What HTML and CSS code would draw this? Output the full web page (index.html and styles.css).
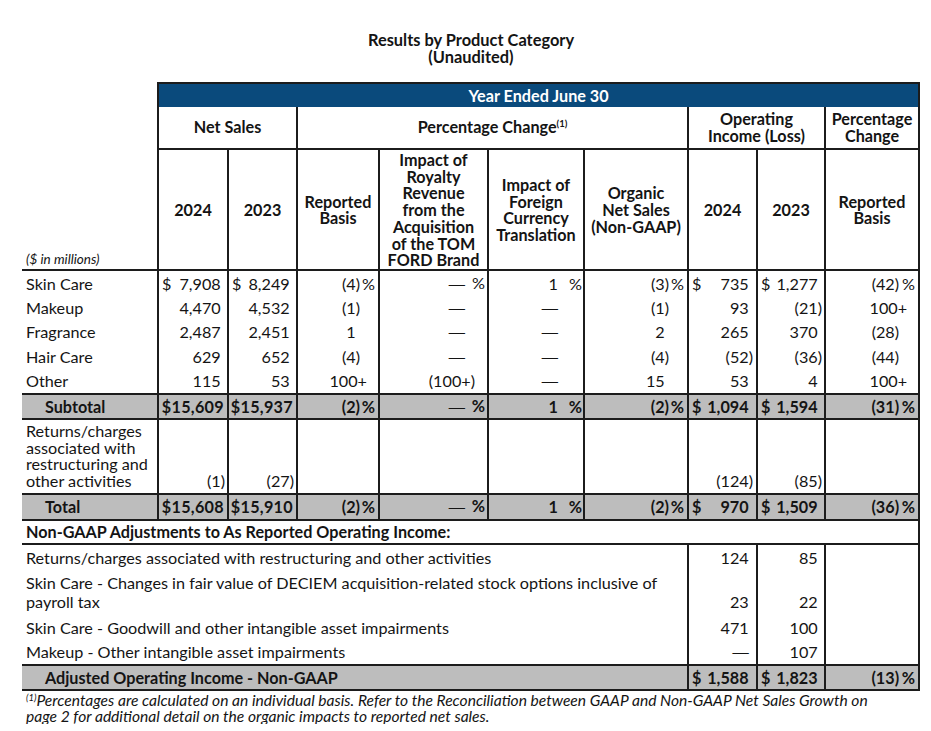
FILE: index.html
```html
<!DOCTYPE html>
<html>
<head>
<meta charset="utf-8">
<link rel="stylesheet" href="styles.css">
</head>
<body>
<div class="page">
  <div class="title">Results by Product Category<br>(Unaudited)</div>
  <table class="fin">
    <colgroup>
      <col class="w0"><col class="w1"><col class="w2"><col class="w3"><col class="w4"><col class="w5"><col class="w6"><col class="w7"><col class="w8"><col class="w9">
    </colgroup>
    <thead>
      <tr class="h1">
        <th class="blank"></th>
        <th colspan="9" class="year">Year Ended June 30</th>
      </tr>
      <tr class="h2">
        <th class="blank units-cell" rowspan="2"><span class="units">($ in millions)</span></th>
        <th colspan="2">Net Sales</th>
        <th colspan="4">Percentage Change<sup>(1)</sup></th>
        <th colspan="2" class="two">Operating<br>Income (Loss)</th>
        <th class="two">Percentage<br>Change</th>
      </tr>
      <tr class="h3">
        <th>2024</th>
        <th>2023</th>
        <th>Reported<br>Basis</th>
        <th>Impact of<br>Royalty<br>Revenue<br>from the<br>Acquisition<br>of the TOM<br>FORD Brand</th>
        <th>Impact of<br>Foreign<br>Currency<br>Translation</th>
        <th>Organic<br>Net Sales<br>(Non-GAAP)</th>
        <th>2024</th>
        <th>2023</th>
        <th>Reported<br>Basis</th>
      </tr>
    </thead>
    <tbody>
      <tr class="d first">
        <td class="lbl">Skin Care</td>
        <td class="n c1"><span class="cur">$</span>7,908<i class="gh">)</i></td>
        <td class="n c2"><span class="cur">$</span>8,249<i class="gh">)</i></td>
        <td class="n c3">(4)<span class="pc">%</span></td>
        <td class="n c4"><span class="dash">—</span><span class="pc">%</span></td>
        <td class="n c5">1<span class="pc">%</span></td>
        <td class="n c6">(3)<span class="pc">%</span></td>
        <td class="n c7"><span class="cur">$</span>735<i class="gh">)</i></td>
        <td class="n c8"><span class="cur">$</span>1,277<i class="gh">)</i></td>
        <td class="n c9">(42)<span class="pc">%</span></td>
      </tr>
      <tr class="d">
        <td class="lbl">Makeup</td>
        <td class="n c1">4,470<i class="gh">)</i></td>
        <td class="n c2">4,532<i class="gh">)</i></td>
        <td class="n c3">(1)<span class="pc"></span></td>
        <td class="n c4"><span class="dash">—</span><span class="pc"></span></td>
        <td class="n c5"><span class="dash">—</span><span class="pc"></span></td>
        <td class="n c6">(1)<span class="pc"></span></td>
        <td class="n c7">93<i class="gh">)</i></td>
        <td class="n c8">(21)</td>
        <td class="n c9">100+<span class="pc pcs"></span></td>
      </tr>
      <tr class="d">
        <td class="lbl">Fragrance</td>
        <td class="n c1">2,487<i class="gh">)</i></td>
        <td class="n c2">2,451<i class="gh">)</i></td>
        <td class="n c3">1<i class="gh">)</i><span class="pc"></span></td>
        <td class="n c4"><span class="dash">—</span><span class="pc"></span></td>
        <td class="n c5"><span class="dash">—</span><span class="pc"></span></td>
        <td class="n c6">2<i class="gh">)</i><span class="pc"></span></td>
        <td class="n c7">265<i class="gh">)</i></td>
        <td class="n c8">370<i class="gh">)</i></td>
        <td class="n c9">(28)<span class="pc"></span></td>
      </tr>
      <tr class="d">
        <td class="lbl">Hair Care</td>
        <td class="n c1">629<i class="gh">)</i></td>
        <td class="n c2">652<i class="gh">)</i></td>
        <td class="n c3">(4)<span class="pc"></span></td>
        <td class="n c4"><span class="dash">—</span><span class="pc"></span></td>
        <td class="n c5"><span class="dash">—</span><span class="pc"></span></td>
        <td class="n c6">(4)<span class="pc"></span></td>
        <td class="n c7">(52)</td>
        <td class="n c8">(36)</td>
        <td class="n c9">(44)<span class="pc"></span></td>
      </tr>
      <tr class="d">
        <td class="lbl">Other</td>
        <td class="n c1">115<i class="gh">)</i></td>
        <td class="n c2">53<i class="gh">)</i></td>
        <td class="n c3">100+<span class="pc pcs"></span></td>
        <td class="n c4">(100+)<span class="pc pcs"></span></td>
        <td class="n c5"><span class="dash">—</span><span class="pc"></span></td>
        <td class="n c6">15<i class="gh">)</i><span class="pc"></span></td>
        <td class="n c7">53<i class="gh">)</i></td>
        <td class="n c8">4<i class="gh">)</i></td>
        <td class="n c9">100+<span class="pc pcs"></span></td>
      </tr>
      <tr class="d band">
        <td class="lbl ind">Subtotal</td>
        <td class="n c1 bt">$15,609</td>
        <td class="n c2 bt">$15,937</td>
        <td class="n c3">(2)<span class="pc">%</span></td>
        <td class="n c4"><span class="dash">—</span><span class="pc">%</span></td>
        <td class="n c5">1<span class="pc">%</span></td>
        <td class="n c6">(2)<span class="pc">%</span></td>
        <td class="n c7"><span class="cur">$</span>1,094<i class="gh">)</i></td>
        <td class="n c8"><span class="cur">$</span>1,594<i class="gh">)</i></td>
        <td class="n c9">(31)<span class="pc">%</span></td>
      </tr>
      <tr class="ret">
        <td class="lbl">Returns/charges<br>associated with<br>restructuring and<br>other activities</td>
        <td class="n c1">(1)</td>
        <td class="n c2">(27)</td>
        <td class="n c3"></td>
        <td class="n c4"></td>
        <td class="n c5"></td>
        <td class="n c6"></td>
        <td class="n c7">(124)</td>
        <td class="n c8">(85)</td>
        <td class="n c9"></td>
      </tr>
      <tr class="d band tot">
        <td class="lbl ind">Total</td>
        <td class="n c1 bt">$15,608</td>
        <td class="n c2 bt">$15,910</td>
        <td class="n c3">(2)<span class="pc">%</span></td>
        <td class="n c4"><span class="dash">—</span><span class="pc">%</span></td>
        <td class="n c5">1<span class="pc">%</span></td>
        <td class="n c6">(2)<span class="pc">%</span></td>
        <td class="n c7"><span class="cur">$</span>970<i class="gh">)</i></td>
        <td class="n c8"><span class="cur">$</span>1,509<i class="gh">)</i></td>
        <td class="n c9">(36)<span class="pc">%</span></td>
      </tr>
      <tr class="gh-head">
        <td colspan="10" class="lbl sect">Non-GAAP Adjustments to As Reported Operating Income:</td>
      </tr>
      <tr class="adj a1">
        <td colspan="7" class="lbl">Returns/charges associated with restructuring and other activities</td>
        <td class="n c7">124<i class="gh">)</i></td>
        <td class="n c8">85<i class="gh">)</i></td>
        <td class="n c9"></td>
      </tr>
      <tr class="adj two-line">
        <td colspan="7" class="lbl">Skin Care - Changes in fair value of DECIEM acquisition-related stock options inclusive of<br>payroll tax</td>
        <td class="n c7">23<i class="gh">)</i></td>
        <td class="n c8">22<i class="gh">)</i></td>
        <td class="n c9"></td>
      </tr>
      <tr class="adj">
        <td colspan="7" class="lbl">Skin Care - Goodwill and other intangible asset impairments</td>
        <td class="n c7">471<i class="gh">)</i></td>
        <td class="n c8">100<i class="gh">)</i></td>
        <td class="n c9"></td>
      </tr>
      <tr class="adj">
        <td colspan="7" class="lbl">Makeup - Other intangible asset impairments</td>
        <td class="n c7"><span class="dash">—</span><i class="gh">)</i></td>
        <td class="n c8">107<i class="gh">)</i></td>
        <td class="n c9"></td>
      </tr>
      <tr class="d band">
        <td colspan="7" class="lbl ind">Adjusted Operating Income - Non-GAAP</td>
        <td class="n c7"><span class="cur">$</span>1,588<i class="gh">)</i></td>
        <td class="n c8"><span class="cur">$</span>1,823<i class="gh">)</i></td>
        <td class="n c9">(13)<span class="pc">%</span></td>
      </tr>
    </tbody>
  </table>
  <p class="note"><sup>(1)</sup>Percentages are calculated on an individual basis. Refer to the Reconciliation between GAAP and Non-GAAP Net Sales Growth on<br>page 2 for additional detail on the organic impacts to reported net sales.</p>
</div>
</body>
</html>
```

FILE: styles.css
```css
body {
  margin: 0;
  background: #fff;
  color: #141414;
  font-family: Lato, "Open Sans", sans-serif;
}

.page {
  padding: 31px 0 0 22px;
  width: 900px;
}

.title {
  width: 898px;
  font-weight: 700;
  font-size: 16.4px;
  line-height: 17px;
  text-align: center;
  margin-bottom: 17px;
}

table.fin {
  border-collapse: collapse;
  table-layout: fixed;
  width: 898px;
  font-size: 16.2px;
}

.w0 { width: 136px; }
.w1 { width: 70px; }
.w2 { width: 69px; }
.w3 { width: 82px; }
.w4 { width: 109px; }
.w5 { width: 96px; }
.w6 { width: 104px; }
.w7 { width: 69px; }
.w8 { width: 68px; }
.w9 { width: 94px; }

th, td {
  padding: 0;
  border: none;
}

thead th {
  font-weight: 700;
  font-size: 16.2px;
  line-height: 16.7px;
  text-align: center;
  vertical-align: middle;
  border: 2px solid #1c1c1c;
}

thead th.blank {
  border: none;
}

th.year {
  background: #0a4a7c;
  color: #fff;
  height: 22px;
  border-bottom: none;
  padding-top: 1px;
}

.h2 th {
  height: 41px;
  border-top: none;
}

.h3 th {
  height: 115px;
  padding-top: 2px;
}

th sup {
  font-size: 9.5px;
  vertical-align: 6px;
  line-height: 0;
}

th.units-cell {
  vertical-align: bottom;
  text-align: left;
  padding: 0 0 3px 4px;
  line-height: 14px;
}

.units {
  font-style: italic;
  font-weight: 400;
  font-size: 13.5px;
}

tbody td {
  border-left: 2px solid #1c1c1c;
  border-right: 2px solid #1c1c1c;
  white-space: nowrap;
}

tbody td.lbl {
  border-left: none;
  padding-left: 4px;
  text-align: left;
}

tbody td.sect {
  border-right: 2px solid #1c1c1c;
  font-weight: 700;
}

tr.first {
  border-top: 2px solid #1c1c1c;
}

tr.d td {
  height: 24.4px;
  vertical-align: middle;
}

tr.band {
  background: #bdbdbd;
  border-top: 2px solid #1c1c1c;
  border-bottom: 2px solid #1c1c1c;
  font-weight: 700;
}

tr.band td {
  height: 23px;
}

tr.band.tot td {
  height: 24px;
}

td.ind {
  padding-left: 23px !important;
}

tr.ret td {
  height: 70px;
  line-height: 16.7px;
  vertical-align: bottom;
  padding-bottom: 3px;
}

tr.gh-head {
  border-bottom: 2px solid #1c1c1c;
}

tr.gh-head td {
  height: 22px;
  vertical-align: middle;
}

tr.adj td {
  height: 24px;
  vertical-align: middle;
}

tr.adj.a1 td {
  height: 25px;
}

tr.two-line td {
  height: auto;
  line-height: 19px;
  vertical-align: bottom;
  padding-top: 3px;
  padding-bottom: 5px;
}

td.n {
  text-align: right;
}

.cur {
  float: left;
}

.gh {
  font-style: normal;
  visibility: hidden;
}

.dash {
  font-family: "Liberation Serif", serif;
  font-weight: 400;
}

.pc {
  display: inline-block;
  text-align: right;
}

.c1 { padding-left: 3px; padding-right: 2px; }
.c2 { padding-left: 3px; padding-right: 2px; }
.c1.bt, .c2.bt { padding-left: 0; padding-right: 3px; letter-spacing: 0.3px; }
.c3 { padding-right: 3px; }
.c3 .pc { width: 15px; }
.c4 { padding-right: 2px; }
.c4 .pc { width: 20px; }
.c5 { padding-right: 1px; }
.c5 .pc { width: 24px; }
.c6 { padding-right: 3px; }
.c6 .pc { width: 15px; }
.c7 { padding-left: 3px; padding-right: 3px; }
.c8 { padding-left: 3px; padding-right: 2px; }
.c9 { padding-right: 3px; }
.c9 .pc { width: 16px; }
.c3 .pcs, .c9 .pcs { width: 8px; }
.c4 .pcs { width: 10px; }

.note {
  margin: 1px 0 0 4px;
  font-style: italic;
  font-size: 15.6px;
  line-height: 16px;
}

.note sup {
  font-size: 9.5px;
  vertical-align: 5px;
  line-height: 0;
}
```
